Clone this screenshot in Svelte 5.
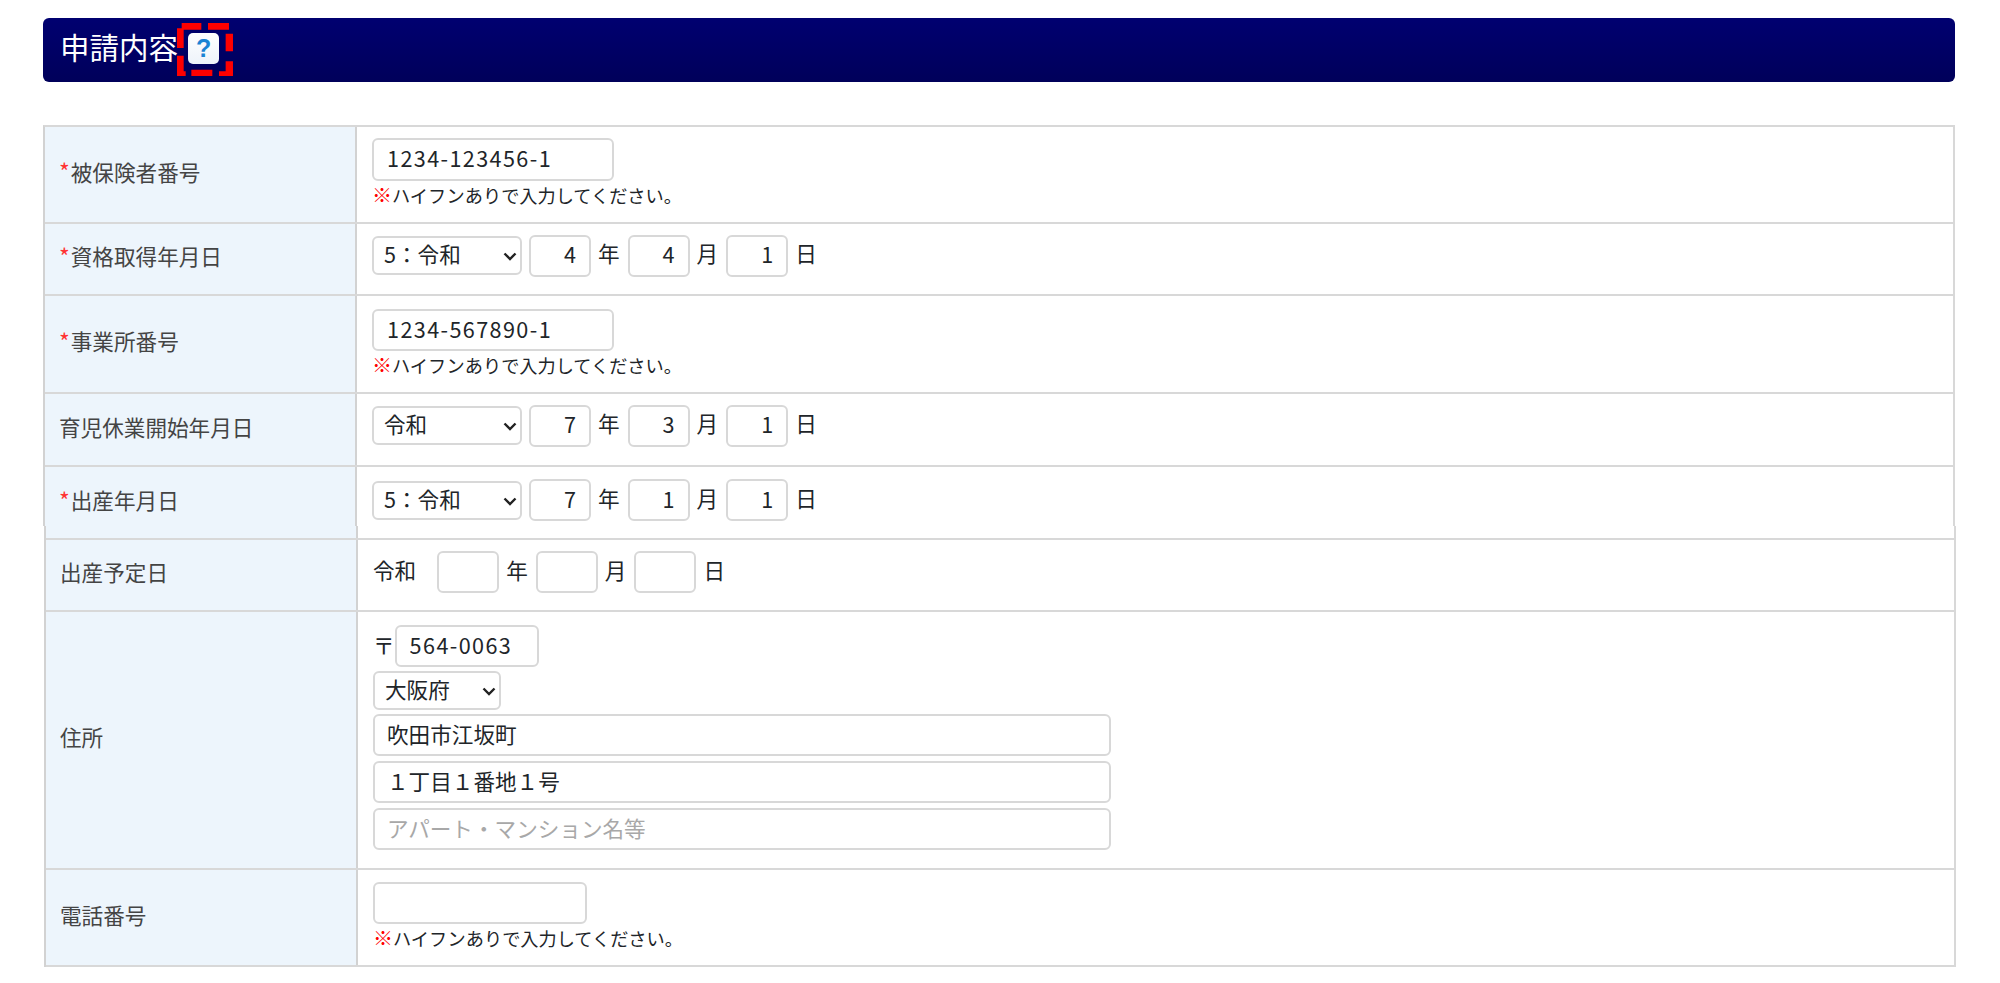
<script>
  const note = 'ハイフンありで入力してください。';
</script>

{#snippet chevron()}
  <svg class="chev" viewBox="0 0 14 9" width="14" height="9" aria-hidden="true">
    <path d="M1.5 1.5 7 7l5.5-5.5" fill="none" stroke="#222" stroke-width="2.4" />
  </svg>
{/snippet}

<div class="page">
  <div class="header">
    <h2>申請内容</h2>
    <span class="help">
      <span class="help-btn">?</span>
      <svg class="dash" viewBox="22 20 168 160" width="56" height="53.3" aria-hidden="true">
        <path fill="#f00" d="M36 20h59v20H36zM22 36h20v59H22zM115 20h63v20h-63zM168 52h22v53h-22zM168 135h22v45h-22zM148 165h42v15h-42zM65 160h63v20H65zM22 118h20v62H22zM22 165h26v15H22z" />
      </svg>
    </span>
  </div>

  <div class="table first">
    <div class="row r1">
      <div class="th"><span class="req">*</span>被保険者番号</div>
      <div class="td stack">
        <input class="w242 latin tall" value="1234-123456-1" />
        <div class="note"><span class="mark">※</span>{note}</div>
      </div>
    </div>
    <div class="row r2">
      <div class="th"><span class="req">*</span>資格取得年月日</div>
      <div class="td date">
        <span class="sel era">
          <select><option>5：令和</option></select>
          {@render chevron()}
        </span>
        <input class="num" value="4" /><span class="unit">年</span>
        <input class="num" value="4" /><span class="unit">月</span>
        <input class="num" value="1" /><span class="unit">日</span>
      </div>
    </div>
    <div class="row r3">
      <div class="th"><span class="req">*</span>事業所番号</div>
      <div class="td stack">
        <input class="w242 latin" value="1234-567890-1" />
        <div class="note"><span class="mark">※</span>{note}</div>
      </div>
    </div>
    <div class="row r4">
      <div class="th">育児休業開始年月日</div>
      <div class="td date">
        <span class="sel era">
          <select><option>令和</option></select>
          {@render chevron()}
        </span>
        <input class="num" value="7" /><span class="unit">年</span>
        <input class="num" value="3" /><span class="unit">月</span>
        <input class="num" value="1" /><span class="unit">日</span>
      </div>
    </div>
    <div class="row r5">
      <div class="th"><span class="req">*</span>出産年月日</div>
      <div class="td date">
        <span class="sel era">
          <select><option>5：令和</option></select>
          {@render chevron()}
        </span>
        <input class="num" value="7" /><span class="unit">年</span>
        <input class="num" value="1" /><span class="unit">月</span>
        <input class="num" value="1" /><span class="unit">日</span>
      </div>
    </div>
  </div>

  <div class="table second">
    <div class="row r0"><div class="th"></div><div class="td"></div></div>
    <div class="row r6">
      <div class="th">出産予定日</div>
      <div class="td date">
        <span class="unit era-text">令和</span>
        <input class="num" /><span class="unit">年</span>
        <input class="num" /><span class="unit">月</span>
        <input class="num" /><span class="unit">日</span>
      </div>
    </div>
    <div class="row r7">
      <div class="th">住所</div>
      <div class="td addr">
        <div class="zip"><span class="post">〒</span><input class="w144 latin" value="564-0063" /></div>
        <span class="sel pref">
          <select><option>大阪府</option></select>
          {@render chevron()}
        </span>
        <input class="wide" value="吹田市江坂町" />
        <input class="wide" value="１丁目１番地１号" />
        <input class="wide" placeholder="アパート・マンション名等" />
      </div>
    </div>
    <div class="row r8">
      <div class="th">電話番号</div>
      <div class="td stack">
        <input class="w214" />
        <div class="note"><span class="mark">※</span>{note}</div>
      </div>
    </div>
  </div>
</div>

<style>
  :global(body) {
    margin: 0;
    background: #fff;
    font-family: "Noto Sans CJK JP", "Noto Sans", sans-serif;
    color: #212529;
  }
  .page {
    padding: 18px 43px 0;
    width: 2000px;
    height: 983px;
    box-sizing: border-box;
    overflow: hidden;
  }
  .header {
    height: 64px;
    width: 1912px;
    box-sizing: border-box;
    background: linear-gradient(#000070, #00005a);
    border-radius: 6px;
    display: flex;
    align-items: center;
    padding-left: 17px;
    margin-bottom: 43px;
  }
  h2 {
    margin: -7px 0 0;
    font-size: 29.5px;
    font-weight: 400;
    color: #fff;
    line-height: 1;
  }
  .help {
    position: relative;
    display: block;
    width: 31px;
    height: 31px;
    margin-left: 10px;
    margin-top: -4px;
  }
  .help-btn {
    display: flex;
    align-items: center;
    justify-content: center;
    width: 31px;
    height: 31px;
    background: linear-gradient(#fff, #edf3fa);
    border-radius: 5px;
    color: #1a83d4;
    font-family: "Liberation Sans", sans-serif;
    font-weight: 700;
    font-size: 25px;
    line-height: 1;
  }
  .dash {
    position: absolute;
    left: -11px;
    top: -10px;
  }
  .table {
    width: 1912px;
    box-sizing: border-box;
    border-left: 2px solid #d2d2d2;
    border-right: 2px solid #d8d8d8;
  }
  .first {
    border-top: 2px solid #d8d8d8;
  }
  .second {
    margin-left: 1px;
  }
  .row {
    display: grid;
    grid-template-columns: 312px 1fr;
    box-sizing: border-box;
    border-bottom: 2px solid #d8d8d8;
  }
  .r1 { height: 97px; }
  .r2 { height: 72px; }
  .r3 { height: 98px; }
  .r4 { height: 73px; }
  .r5 { height: 59px; border-bottom: 0; }
  .r0 { height: 14px; }
  .r6 { height: 72px; }
  .r7 { height: 258px; }
  .r8 { height: 97px; }
  .th {
    background: #edf5fc;
    border-right: 2px solid #d2d2d2;
    display: flex;
    align-items: center;
    padding: 0 0 7px 14px;
    font-size: 21.6px;
    color: #444;
    box-sizing: border-box;
  }
  .r5 .th { padding-bottom: 0; padding-top: 6px; }
  .req { color: #f33; font-size: 23px; margin-right: 1px; }
  .td {
    padding-left: 15px;
    box-sizing: border-box;
    min-width: 0;
  }
  .stack {
    display: flex;
    flex-direction: column;
    justify-content: flex-start;
    padding-top: 13px;
  }
  .r1 .stack { padding-top: 11px; }
  .r8 .stack { padding-top: 12px; }
  .note {
    font-size: 18.2px;
    line-height: 28px;
    color: #212529;
  }
  .mark { color: #f00; font-weight: 900; font-size: 20px; }
  input, select {
    box-sizing: border-box;
    height: 42px;
    border: 2px solid #d8d8d8;
    border-radius: 6px;
    background: #fff;
    font-family: inherit;
    font-size: 21.6px;
    color: #212529;
    padding: 0 12px 4px;
    outline: none;
    margin: 0;
  }
  input::placeholder { color: #a8a8a8; opacity: 1; }
  select {
    appearance: none;
    width: 100%;
    height: 39px;
    padding: 0 24px 4px 10px;
    display: block;
  }
  .sel { position: relative; display: block; }
  .chev {
    position: absolute;
    right: 5px;
    top: 16px;
    pointer-events: none;
  }
  .latin { letter-spacing: 1.4px; padding-left: 13px; }
  .tall { height: 43px; }
  .w242 { width: 242px; }
  .w214 { width: 214px; }
  .w144 { width: 144px; }
  .wide { width: 738px; }
  .date {
    display: flex;
    align-items: center;
    font-size: 21.6px;
    padding-bottom: 7px;
  }
  .r4 .date { padding-bottom: 8px; }
  .r5 .date { padding: 7px 0 0 15px; }
  .r6 .date { padding-bottom: 6px; }
  .unit { margin: 0 8px 6px 7px; color: #212529; }
  .unit.era-text { margin: 0 21px 6px 0; }
  .era {
    width: 150px;
    margin-right: 7px;
  }
  .num {
    width: 62px;
    text-align: right;
    padding-right: 13px;
  }
  .addr {
    display: flex;
    flex-direction: column;
    align-items: flex-start;
    gap: 4px;
    padding-top: 13px;
    font-size: 21.6px;
  }
  .addr .wide + .wide { margin-top: 1px; }
  .zip { display: flex; align-items: center; }
  .post { margin-bottom: 4px; }
  .pref { width: 128px; }
</style>
